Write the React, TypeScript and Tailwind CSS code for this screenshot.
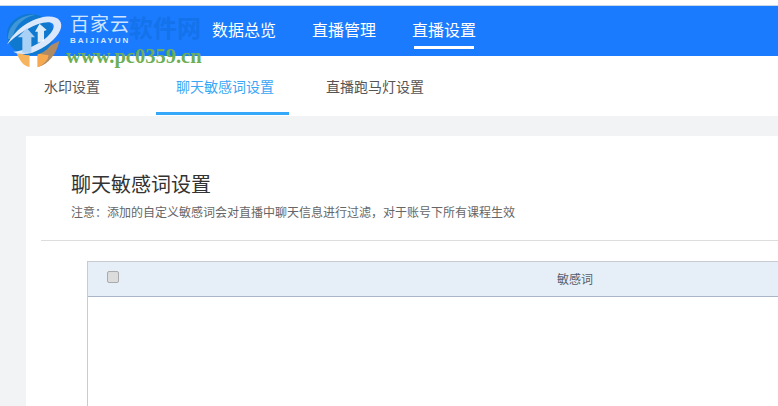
const font = "font-['Liberation_Sans','Noto_Sans_CJK_SC',sans-serif]";

function LogoMark() {
  return (
    <svg viewBox="0 0 66 62" className="absolute left-[5px] top-[12px] w-[60px] h-[56px]">
      <path d="M12 44 C16 54 20 60 27 61 L27 44 Z" fill="#f7b45f" />
      <path d="M36 44 L36 61 C48 58 57 46 60 32 Z" fill="#b08a63" />
      <path d="M36 46 L48 48 L47 52 C44 56 40 60 36 61 Z" fill="#f7a94f" />
      <ellipse cx="28" cy="25" rx="26" ry="23" fill="#0f78cf" />
      <path d="M3 30 C3 12 20 2 34 3 C22 5 10 14 8 30 Z" fill="#3f96d8" />
      <path d="M2 36 C10 22 24 8 46 5 C58 4 65 10 61 20 C56 31 44 40 30 45 C22 47 14 47 9 44 C28 42 48 30 53 19 C56 12 50 10 42 12 C28 15 12 26 2 36 Z" fill="#dbe8fb" />
      <path d="M24 18 L33 28 L29 28 L29 45 L19 45 L19 28 L14 28 Z" fill="#a9d0f5" />
      <path d="M38 13 L46 20 L43 21 L43 32 L36 34 L36 22 L33 22 Z" fill="#ffffff" opacity="0.85" />
    </svg>
  );
}

export default function App() {
  return (
    <div className={`${font} relative w-[778px] h-[406px] overflow-hidden bg-[#f2f3f5]`}>
      <div className="h-[5px] bg-white" />
      <div className="h-px bg-[#c9d6e6]" />

      <header className="h-[50px] bg-[#1a7bff] flex text-white">
        <div className="w-[212px] shrink-0 pl-[70px] pt-[9px] leading-none">
          <div className="text-[19px] tracking-[1px] text-[#cfe4ff]">百家云</div>
          <div className="mt-[3px] text-[8px] font-bold tracking-[2px] text-[#d7e8ff]">BAIJIAYUN</div>
        </div>
        <nav className="flex gap-[36px] text-base">
          <div className="pt-[13px] w-[64px]">数据总览</div>
          <div className="pt-[13px] w-[64px]">直播管理</div>
          <div className="pt-[13px] w-[64px] relative">
            直播设置
            <div className="absolute left-[2px] right-[2px] top-[40px] h-[3px] bg-white" />
          </div>
        </nav>
      </header>

      <div className="h-[60px] bg-white flex text-sm text-[#555555]">
        <div className="w-[156px] pl-[44px] pt-[21px]">水印设置</div>
        <div className="w-[133px] h-[59px] pl-[20px] pt-[21px] text-[#3aa6f5] border-b-[3px] border-[#35a8fa]">聊天敏感词设置</div>
        <div className="pl-[37px] pt-[21px]">直播跑马灯设置</div>
      </div>

      <main className="mt-[20px] ml-[26px] h-[300px] bg-white">
        <div className="pl-[45px] pt-[36px]">
          <h1 className="text-xl leading-[26px] text-[#333333]">聊天敏感词设置</h1>
          <p className="mt-[6px] text-xs leading-[18px] text-[#666666]">注意：添加的自定义敏感词会对直播中聊天信息进行过滤，对于账号下所有课程生效</p>
        </div>
        <div className="mt-[18px] ml-[15px] h-px bg-[#dddddd]" />
        <section className="mt-[20px] ml-[61px] h-[200px] border-l border-t border-[#c8ccd2]">
          <div className="h-[35px] bg-[#e6eef8] border-b border-[#aab6c8] flex">
            <div className="w-[469px] pt-[9px] pl-[19px]">
              <div className="w-[12px] h-[12px] rounded-[2px] bg-[#dcdcdc] border border-[#aaaaaa]" />
            </div>
            <div className="pt-[10px] text-xs text-[#555f6e]">敏感词</div>
          </div>
        </section>
      </main>

      <LogoMark />
      <div className="absolute left-[129px] top-[17px] text-[24px] leading-none font-bold text-[#1472ea]">软件网</div>
      <div className="absolute left-[66px] top-[45px] font-['Liberation_Serif',serif] text-[20.5px] leading-[22px] font-bold text-[#6eae55]">www.pc0359.cn</div>
    </div>
  );
}
